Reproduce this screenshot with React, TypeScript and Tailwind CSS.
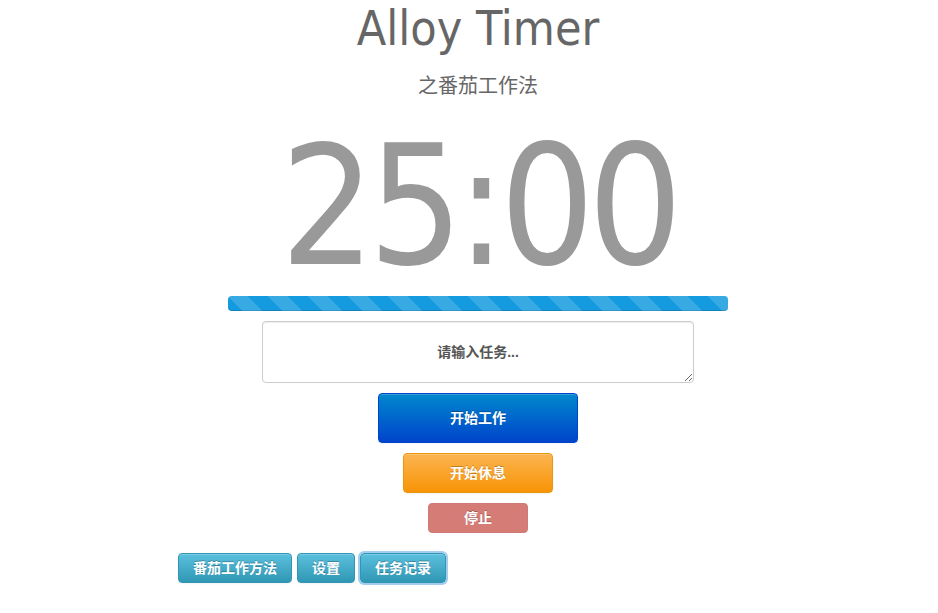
import React from 'react';

const latin = '[font-family:"DejaVu_Sans_Condensed","DejaVu_Sans","Noto_Sans_CJK_SC",sans-serif]';
const cjk = 'font-["Liberation_Sans","Noto_Sans_CJK_SC",sans-serif]';

const btn =
  'flex items-center justify-center rounded-[4px] border text-[14px] font-bold text-white [text-shadow:0_-1px_0_rgba(0,0,0,0.25)] shadow-[inset_0_1px_0_rgba(255,255,255,0.2),0_1px_2px_rgba(0,0,0,0.05)]';

const infoBtn =
  'h-[30px] border-[#2f96b4] bg-[linear-gradient(to_bottom,#5bc0de,#2f96b4)] px-[14px]';

export default function App() {
  return (
    <div className={`min-h-[613px] w-full bg-white ${cjk}`}>
      {/* main column, centred a little right of the window */}
      <div className="flex flex-col items-center pl-[18px]">
        <h1 className={`mt-[2px] text-[48px] leading-[53px] text-[#666] ${latin} font-normal`}>Alloy Timer</h1>
        <p className="mt-[19px] text-[20px] leading-[24px] text-[#666]">之番茄工作法</p>

        <div className={`mt-[24px] text-[166px] leading-[170px] tracking-[-7px] text-[#999] ${latin}`}>25:00</div>

        {/* striped progress bar */}
        <div className="mt-[4px] h-[15px] w-[500px] overflow-hidden rounded-[4px] bg-[#149bdf] shadow-[inset_0_-1px_0_rgba(0,0,0,0.15)]">
          <div className="h-full w-full bg-[linear-gradient(45deg,rgba(255,255,255,0.15)_25%,transparent_25%,transparent_50%,rgba(255,255,255,0.15)_50%,rgba(255,255,255,0.15)_75%,transparent_75%,transparent)] bg-[length:40px_40px]" />
        </div>

        <textarea
          placeholder="请输入任务..."
          className="mt-[10px] h-[62px] w-[432px] rounded-[4px] border border-[#ccc] bg-white px-[6px] pt-[20px] text-center text-[14px] font-bold leading-[20px] text-[#555] shadow-[inset_0_1px_1px_rgba(0,0,0,0.075)] outline-none placeholder:text-[#555]"
        />

        <button className={`${btn} mt-[10px] h-[50px] w-[200px] border-[#0044cc] bg-[linear-gradient(to_bottom,#0088cc,#0044cc)]`}>
          开始工作
        </button>
        <button className={`${btn} mt-[10px] h-[40px] w-[150px] border-[#e8970e] bg-[linear-gradient(to_bottom,#fbb450,#f89406)]`}>
          开始休息
        </button>
        <button className={`${btn} mt-[10px] h-[30px] w-[100px] border-[#d07a75] bg-[#d57c77] shadow-none`}>
          停止
        </button>
      </div>

      {/* footer buttons */}
      <div className="mt-[20px] flex gap-[5px] pl-[178px]">
        <button className={`${btn} ${infoBtn}`}>番茄工作方法</button>
        <button className={`${btn} ${infoBtn}`}>设置</button>
        <button className={`${btn} ${infoBtn} ring-2 ring-[#7fb8ea]/70`}>任务记录</button>
      </div>
    </div>
  );
}
